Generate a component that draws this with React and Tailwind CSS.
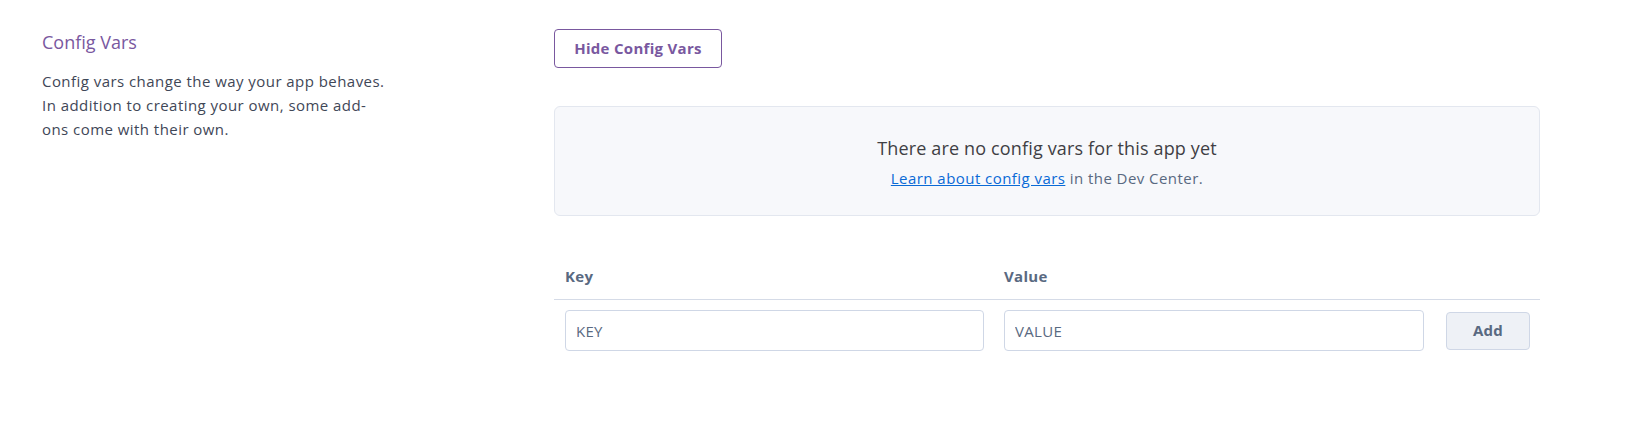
import React from 'react';

function Intro() {
  return (
    <div className="w-[554px] shrink-0 pl-[42px] pt-[30px]">
      <h2 className="text-[18px] leading-[24px] text-[#79589f]">Config Vars</h2>
      <p className="mt-[15px] w-[346px] text-[15px] leading-[24px] tracking-[0.45px] text-[#3f4757]">
        Config vars change the way your app behaves. In addition to creating your own, some add-ons come with their own.
      </p>
    </div>
  );
}

function EmptyNotice() {
  return (
    <div className="mt-[38px] h-[110px] rounded-[6px] border border-[#e3e7ef] bg-[#f7f8fb] pt-[29px] text-center">
      <div className="text-[18px] leading-[24px] tracking-[0.15px] text-[#3f3f44]">There are no config vars for this app yet</div>
      <div className="mt-[8px] text-[15px] leading-[20px] tracking-[0.45px] text-[#596981]">
        <a href="#" className="text-[#0a6ad6] underline">Learn about config vars</a> in the Dev Center.
      </div>
    </div>
  );
}

function VarTable() {
  return (
    <div className="mt-[50px]">
      <div className="flex border-b border-[#d5dbe7] pb-[13px] text-[15px] font-bold leading-[20px] tracking-[0.3px] text-[#596981]">
        <div className="w-[440px] pl-[11px]">Key</div>
        <div className="w-[440px] pl-[10px]">Value</div>
      </div>
      <div className="flex items-center pt-[10px]">
        <div className="w-[440px] pl-[11px] pr-[10px]">
          <input
            placeholder="KEY"
            className="h-[41px] w-full rounded-[4px] border border-[#cfd7e6] bg-white px-[10px] text-[15px] tracking-[0.3px] text-[#3f3f44] outline-none placeholder:text-[#596981]"
          />
        </div>
        <div className="w-[440px] px-[10px]">
          <input
            placeholder="VALUE"
            className="h-[41px] w-full rounded-[4px] border border-[#cfd7e6] bg-white px-[10px] text-[15px] tracking-[0.3px] text-[#3f3f44] outline-none placeholder:text-[#596981]"
          />
        </div>
        <div className="pl-[12px] pr-[10px]">
          <button className="h-[38px] w-[84px] rounded-[4px] border border-[#cfd7e6] bg-[#eef1f6] text-[15px] font-bold tracking-[0.3px] text-[#596981]">
            Add
          </button>
        </div>
      </div>
    </div>
  );
}

export default function App() {
  return (
    <div className="flex min-h-[442px] bg-white font-['Open_Sans',sans-serif]">
      <Intro />
      <div className="w-[986px] shrink-0 pt-[29px]">
        <button className="h-[39px] w-[168px] rounded-[4px] border border-[#79589f] bg-white text-[15px] font-bold tracking-[0.3px] text-[#79589f]">
          Hide Config Vars
        </button>
        <EmptyNotice />
        <VarTable />
      </div>
    </div>
  );
}
